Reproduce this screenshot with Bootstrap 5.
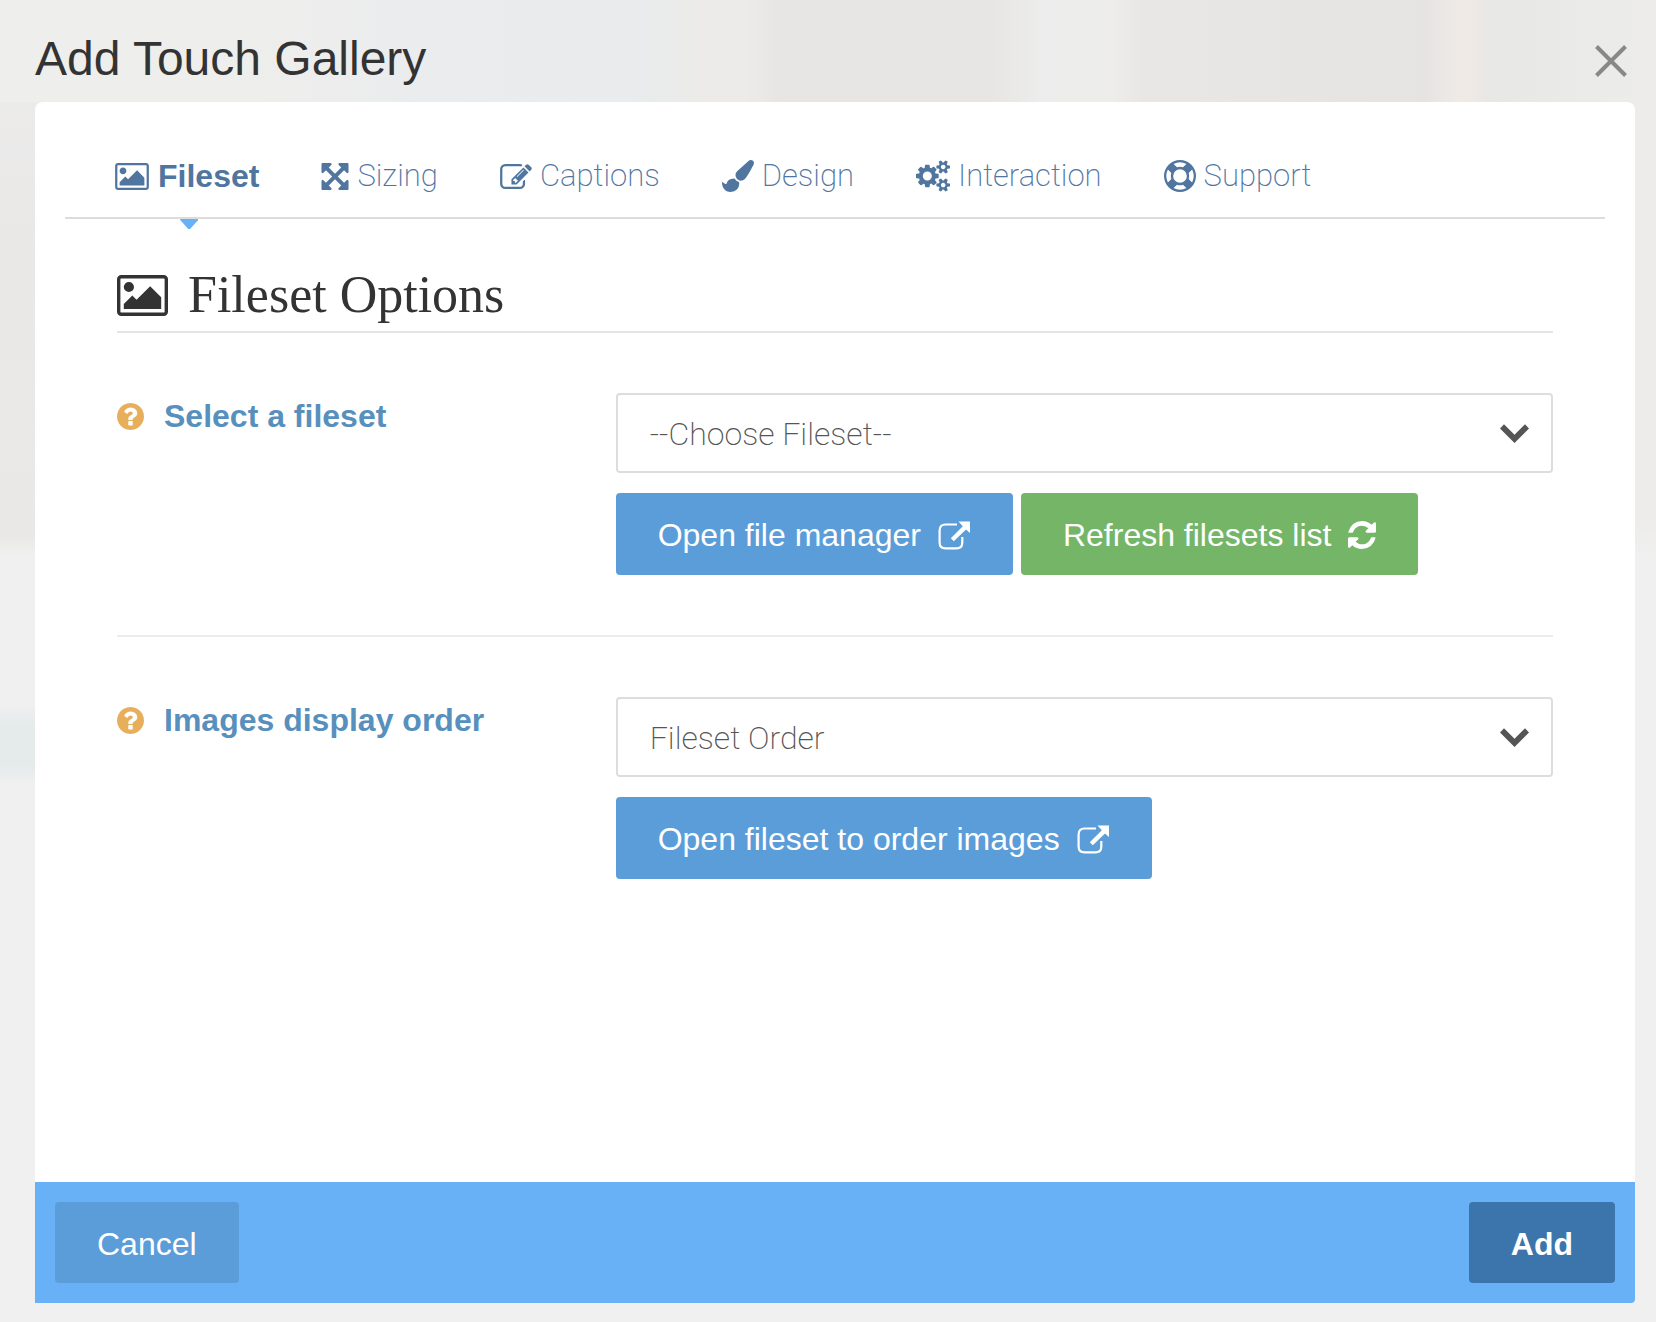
<!DOCTYPE html>
<html lang="en">
<head>
<meta charset="utf-8">
<meta name="viewport" content="width=device-width, initial-scale=1">
<title>Add Touch Gallery</title>
<link href="https://cdn.jsdelivr.net/npm/bootstrap@5.3.0/dist/css/bootstrap.min.css" rel="stylesheet">
<style>
  :root { --ink: #333; --tab: #50759f; --sky: #68b1f6; --blue: #5b9dd8; }
  body {
    font-family: "Liberation Sans", Arial, sans-serif; font-size: 32px; line-height: 44px; color: var(--ink);
    background: linear-gradient(#edecec 0, #e9e8e7 260px, #ebe9e8 430px, #e9e8e6 535px, #f0f0f0 555px, #f0f0f0 705px, #e5eaea 725px, #e5eaea 765px, #f0f0f0 785px) left top / 35px 1322px no-repeat,
                linear-gradient(#edecea 0, #edecea 520px, #f0f0f0 560px) #f0f0f0;
  }
  .icon { fill: currentColor; flex: none; display: block; }
  .dialog-shell { padding-bottom: 19px; }
  .dialog-head {
    padding: 29px 29px 9px 35px;
    background: linear-gradient(90deg, #eeeeed 0, #eeeeec 14%, #ebeced 24%, #e9ebec 39%, #edebe9 43%, #edebe9 45%, #e8e6e5 47%, #e8e6e5 60%, #ecedec 63%, #eeedeb 67%, #e9e7e6 69%, #e5e4e3 86%, #efeae6 88%, #eee9e5 89%, #e7e7e5 90%, #ebebe9 97%, #edecea 100%);
  }
  .dialog-head h1 { font-size: 48px; line-height: 60px; padding-bottom: 4px; }
  .close-x { color: #888; line-height: 0; }
  .panel { margin: 0 21px 0 35px; background: #fff; border-radius: 8px 8px 4px 0; }
  .tabs { margin: 0 30px; padding: 52px 50px 19px; gap: 62px; border-bottom: 2px solid #dcdcdc; }
  .tabs a { color: var(--tab); gap: 8px; font-family: Roboto, sans-serif; font-weight: 200; font-size: 31px; position: relative; }
  .tabs a.active { font-family: "Liberation Sans", sans-serif; font-weight: 700; font-size: 32px; gap: 9px; }
  .tabs a.active::after {
    content: ""; position: absolute; top: 65px; left: 50%; width: 18px; height: 10px; margin-left: -7px;
    background: var(--sky); clip-path: polygon(0 0, 100% 0, 100% 10%, 55% 100%, 45% 100%, 0 10%);
  }
  .options { padding: 46px 82px 60px; }
  .options h2 { font-family: "Liberation Serif", Georgia, serif; font-size: 52px; line-height: 60px; gap: 20px; padding-bottom: 6px; border-bottom: 2px solid #e5e5e5; }
  .option-row { --bs-gutter-x: 60px; padding-top: 60px; }
  .option-rule { border-top: 2px solid #ebebeb; margin-top: 60px; }
  .option-name { color: #5890bd; font-weight: 700; gap: 20px; padding-top: 1px; }
  .option-name .icon { color: #e7ae5c; }
  .form-select {
    height: 80px; padding: 2px 64px 0 32px; border: 2px solid #ddd; border-radius: 4px; color: #555;
    font-family: Roboto, sans-serif; font-weight: 200; font-size: 32px; line-height: 44px;
    background: #fff url("data:image/svg+xml,%3Csvg xmlns='http://www.w3.org/2000/svg' viewBox='0 0 29 19'%3E%3Cpath fill='%23555' d='M0 4.500L4 0.300L14.500 10.800L25 0.300L29 4.500L14.500 19z'/%3E%3C/svg%3E") no-repeat right 22px center / 29px 19px;
  }
  .btn-flat { --bs-btn-color: #fff; --bs-btn-hover-color: #fff; padding: 22px 42px 19px; border: 0; border-radius: 4px; font-size: 32px; line-height: 40px; gap: 17px; background: var(--blue); color: #fff; }
  .btn-refresh { background: #75b567; }
  .btn-add { background: #3c75ab; font-weight: 700; }
  .actions { gap: 8px; margin-top: 20px; }
  .actions .btn-flat { padding-bottom: 20px; }
  .dialog-foot { background: var(--sky); padding: 20px; border-radius: 0 0 4px 0; }
</style>
</head>
<body>
<svg class="d-none" aria-hidden="true">
  <symbol id="picture" viewBox="-64 128 1920 1536"><path d="M576 576q0 80-56 136t-136 56-136-56-56-136 56-136 136-56 136 56 56 136zm1024 384v448H192v-192l320-320 160 160 512-512zm96-704H96q-13 0-22.500 9.500T64 288v1216q0 13 9.500 22.500t22.500 9.500h1600q13 0 22.500-9.500t9.500-22.500V288q0-13-9.500-22.500T1696 256zm160 32v1216q0 66-47 113t-113 47H96q-66 0-113-47t-47-113V288q0-66 47-113t113-47h1600q66 0 113 47t47 113z"/></symbol>
  <symbol id="external" viewBox="0 0 33 29"><path d="M19 3.500H7.500Q1.600 3.500 1.600 9.500V21.500Q1.600 27.300 7.500 27.300H18.500Q24.300 27.300 24.300 21.500V16" fill="none" stroke="currentColor" stroke-width="2.200"/><path d="M20.500 0.500H32V12L28 8.500L15.800 20.300L12.800 17.300L24.800 5.300Z"/></symbol>
  <symbol id="question" viewBox="128 128 1536 1536"><path d="M1024 1376v-192q0-14-9-23t-23-9H800q-14 0-23 9t-9 23v192q0 14 9 23t23 9h192q14 0 23-9t9-23zm256-672q0-88-55.500-163t-138.500-116-170-41q-243 0-371 213-15 24 8 42l132 100q7 6 19 6 16 0 25-12 53-68 86-92 34-24 86-24 48 0 85.500 26t37.500 59q0 38-20 61t-68 45q-63 28-115.500 86.500T768 1020v36q0 14 9 23t23 9h192q14 0 23-9t9-23q0-19 21.500-49.500T1100 957q32-18 49-28.500t46-35 44.500-48 28-60.500 12.500-81zm384 192q0 209-103 385.500T1281.500 1561 896 1664t-385.500-103T231 1281.500 128 896t103-385.500T510.500 231 896 128t385.500 103T1561 510.500 1664 896z"/></symbol>
</svg>

<div class="dialog-shell d-flex flex-column min-vh-100">
  <header class="dialog-head d-flex justify-content-between align-items-center">
    <h1 class="m-0 fw-normal">Add Touch Gallery</h1>
    <button type="button" class="close-x btn p-0 border-0" aria-label="Close">
      <svg class="icon" width="32" height="32" viewBox="0 0 32 32"><path d="M1.500 1.500L30.500 30.500M30.500 1.500L1.500 30.500" stroke="currentColor" stroke-width="4"/></svg>
    </button>
  </header>

  <main class="panel d-flex flex-column flex-grow-1">
    <nav class="tabs d-flex flex-wrap">
      <a href="#fileset" class="active d-flex align-items-center text-decoration-none"><svg class="icon" width="34" height="27"><use href="#picture"/></svg>Fileset</a>
      <a href="#sizing" class="d-flex align-items-center text-decoration-none"><svg class="icon" width="28" height="27" viewBox="128 128 1536 1536"><path d="M1411 541l-355 355 355 355 144-144q29-31 70-14 39 17 39 59v448q0 26-19 45t-45 19h-448q-42 0-59-40-17-39 14-69l144-144-355-355-355 355 144 144q31 30 14 69-17 40-59 40H192q-26 0-45-19t-19-45v-448q0-42 40-59 39-17 69 14l144 144 355-355-355-355-144 144q-19 19-45 19-12 0-24-5-40-17-40-59V192q0-26 19-45t45-19h448q42 0 59 40 17 39-14 69L541 381l355 355 355-355-144-144q-31-30-14-69 17-40 59-40h448q26 0 45 19t19 45v448q0 42-39 59-13 5-25 5-26 0-45-19z"/></svg>Sizing</a>
      <a href="#captions" class="d-flex align-items-center text-decoration-none"><svg class="icon" width="32" height="25" viewBox="0 128 1792 1408"><path d="M888 1184l116-116-152-152-116 116v56h96v96h56zm440-720q-16-16-33 1L945 815q-17 17-1 33t33-1l350-350q17-17 1-33zm80 594v190q0 119-84.500 203.500T1120 1536H288q-119 0-203.500-84.500T0 1248V416q0-119 84.500-203.500T288 128h832q63 0 117 25 15 7 18 23 3 17-9 29l-49 49q-14 14-32 8-23-6-45-6H288q-66 0-113 47t-47 113v832q0 66 47 113t113 47h832q66 0 113-47t47-113v-126q0-13 9-22l64-64q15-15 35-7t20 29zm-96-738l288 288-672 672H640V992zm444 132l-92 92-288-288 92-92q28-28 68-28t68 28l152 152q28 28 28 68t-28 68z"/></svg>Captions</a>
      <a href="#design" class="d-flex align-items-center text-decoration-none"><svg class="icon" width="32" height="32" viewBox="0 0 1792 1792"><path d="M1615 0q70 0 122.500 46.500T1790 163q0 63-45 151-332 629-465 752-97 91-218 91-126 0-216.500-92.500T755 845q0-128 92-212l638-579q59-54 130-54zM706 1034q39 76 106.500 130t150.500 76l1 71q4 213-129.500 347T487 1792q-123 0-218-46.500T116.500 1618 26 1436t-30-218q7 5 41 30t62 44.500 59 36.500 46 17q41 0 55-37 25-66 57.500-112.500t69.500-76 88-47.500 103-25.500 125-10.500z"/></svg>Design</a>
      <a href="#interaction" class="d-flex align-items-center text-decoration-none"><svg class="icon" width="34" height="32" viewBox="-64 0 1920 1792"><path d="M832 896q0-106-75-181t-181-75-181 75-75 181 75 181 181 75 181-75 75-181zm768 512q0-52-38-90t-90-38-90 38-38 90q0 53 37.500 90.500t90.500 37.500 90.500-37.500 37.500-90.500zm0-1024q0-52-38-90t-90-38-90 38-38 90q0 53 37.500 90.500T1472 512t90.500-37.500T1600 384zm-384 421v185q0 10-7 19.500t-16 10.500l-155 24q-11 35-32 76 34 48 90 115 7 11 7 20 0 12-7 19-23 30-82.500 89.500T935 1423q-11 0-21-7l-115-90q-37 19-77 31-11 108-23 155-7 24-30 24H483q-11 0-20-7.500t-10-17.500l-23-153q-34-10-75-31l-118 89q-7 7-20 7-11 0-21-8-144-133-144-160 0-9 7-19 10-14 41-53t47-61q-23-44-35-82l-152-24q-10-1-17-9.500T-64 987V802q0-10 7-19.500T-41 772l155-24q11-35 32-76-34-48-90-115-7-11-7-20 0-12 7-20 22-30 82-89t79-59q11 0 21 7l115 90q34-18 77-32 11-108 23-154 7-24 30-24h186q11 0 20 7.500t10 17.500l23 153q34 10 75 31l118-89q8-7 20-7 11 0 21 8 144 133 144 160 0 8-7 19-12 16-42 54t-45 60q23 48 34 82l152 23q10 2 17 10.500t7 19.500zm640 533v140q0 16-149 31-12 27-30 52 51 113 51 138 0 4-4 7-122 71-124 71-8 0-46-47t-52-68q-20 2-30 2t-30-2q-14 21-52 68t-46 47q-2 0-124-71-4-3-4-7 0-25 51-138-18-25-30-52-149-15-149-31v-140q0-16 149-31 13-29 30-52-51-113-51-138 0-4 4-7 4-2 35-20t59-34 30-16q8 0 46 46.500t52 67.500q20-2 30-2t30 2q51-71 92-112l6-2q4 0 124 70 4 3 4 7 0 25-51 138 17 23 30 52 149 15 149 31zm0-1024v140q0 16-149 31-12 27-30 52 51 113 51 138 0 4-4 7-122 71-124 71-8 0-46-47t-52-68q-20 2-30 2t-30-2q-14 21-52 68t-46 47q-2 0-124-71-4-3-4-7 0-25 51-138-18-25-30-52-149-15-149-31V314q0-16 149-31 13-29 30-52-51-113-51-138 0-4 4-7 4-2 35-20t59-34 30-16q8 0 46 46.500t52 67.500q20-2 30-2t30 2q51-71 92-112l6-2q4 0 124 70 4 3 4 7 0 25-51 138 17 23 30 52 149 15 149 31z"/></svg>Interaction</a>
      <a href="#support" class="d-flex align-items-center text-decoration-none"><svg class="icon" width="32" height="32" viewBox="0 0 1792 1792"><path d="M896 0q182 0 348 71t286 191 191 286 71 348-71 348-191 286-286 191-348 71-348-71-286-191-191-286T0 896t71-348 191-286T548 71 896 0zm0 128q-190 0-361 90l194 194q82-28 167-28t167 28l194-194q-171-90-361-90zM218 1257l194-194q-28-82-28-167t28-167L218 535q-90 171-90 361t90 361zm678 407q190 0 361-90l-194-194q-82 28-167 28t-167-28l-194 194q171 90 361 90zm0-384q159 0 271.500-112.500T1280 896t-112.500-271.500T896 512 624.500 624.500 512 896t112.500 271.500T896 1280zm484-217l194 194q90-171 90-361t-90-361l-194 194q28 82 28 167t-28 167z"/></svg>Support</a>
    </nav>

    <form class="options flex-grow-1" id="fileset">
      <h2 class="d-flex align-items-center m-0 fw-normal"><svg class="icon" width="51" height="41"><use href="#picture"/></svg>Fileset Options</h2>

      <div class="option-row row">
        <div class="col-4"><label for="filesetId" class="option-name d-flex align-items-center"><svg class="icon" width="27" height="27"><use href="#question"/></svg>Select a fileset</label></div>
        <div class="col-8">
          <select id="filesetId" class="form-select"><option>--Choose Fileset--</option></select>
          <div class="actions d-flex flex-wrap">
            <button type="button" class="btn btn-flat d-flex align-items-center">Open file manager <svg class="icon" width="33" height="29"><use href="#external"/></svg></button>
            <button type="button" class="btn btn-flat btn-refresh d-flex align-items-center">Refresh filesets list <svg class="icon" width="28" height="28" viewBox="128 128 1536 1536"><path d="M1639 1056q0 5-1 7-64 268-268 434.500T892 1664q-146 0-282.500-55T366 1452l-129 129q-19 19-45 19t-45-19-19-45v-448q0-26 19-45t45-19h448q26 0 45 19t19 45-19 45l-137 137q71 66 161 102t187 36q134 0 250-65t186-179q11-17 53-117 8-23 30-23h192q13 0 22.500 9.500t9.500 22.500zm25-800v448q0 26-19 45t-45 19h-448q-26 0-45-19t-19-45 19-45l138-138q-148-137-349-137-134 0-250 65T460 628q-11 17-53 117-8 23-30 23H178q-13 0-22.500-9.500T146 736v-7q65-268 270-434.500T896 128q146 0 284 55.500T1425 340l130-129q19-19 45-19t45 19 19 45z"/></svg></button>
          </div>
        </div>
      </div>

      <div class="option-rule"></div>

      <div class="option-row row">
        <div class="col-4"><label for="displayOrder" class="option-name d-flex align-items-center"><svg class="icon" width="27" height="27"><use href="#question"/></svg>Images display order</label></div>
        <div class="col-8">
          <select id="displayOrder" class="form-select"><option>Fileset Order</option></select>
          <div class="actions d-flex flex-wrap">
            <button type="button" class="btn btn-flat d-flex align-items-center">Open fileset to order images <svg class="icon" width="33" height="29"><use href="#external"/></svg></button>
          </div>
        </div>
      </div>
    </form>

    <footer class="dialog-foot d-flex justify-content-between">
      <button type="button" class="btn btn-flat">Cancel</button>
      <button type="submit" form="fileset" class="btn btn-flat btn-add">Add</button>
    </footer>
  </main>
</div>
<script src="https://cdn.jsdelivr.net/npm/bootstrap@5.3.0/dist/js/bootstrap.bundle.min.js"></script>
</body>
</html>
